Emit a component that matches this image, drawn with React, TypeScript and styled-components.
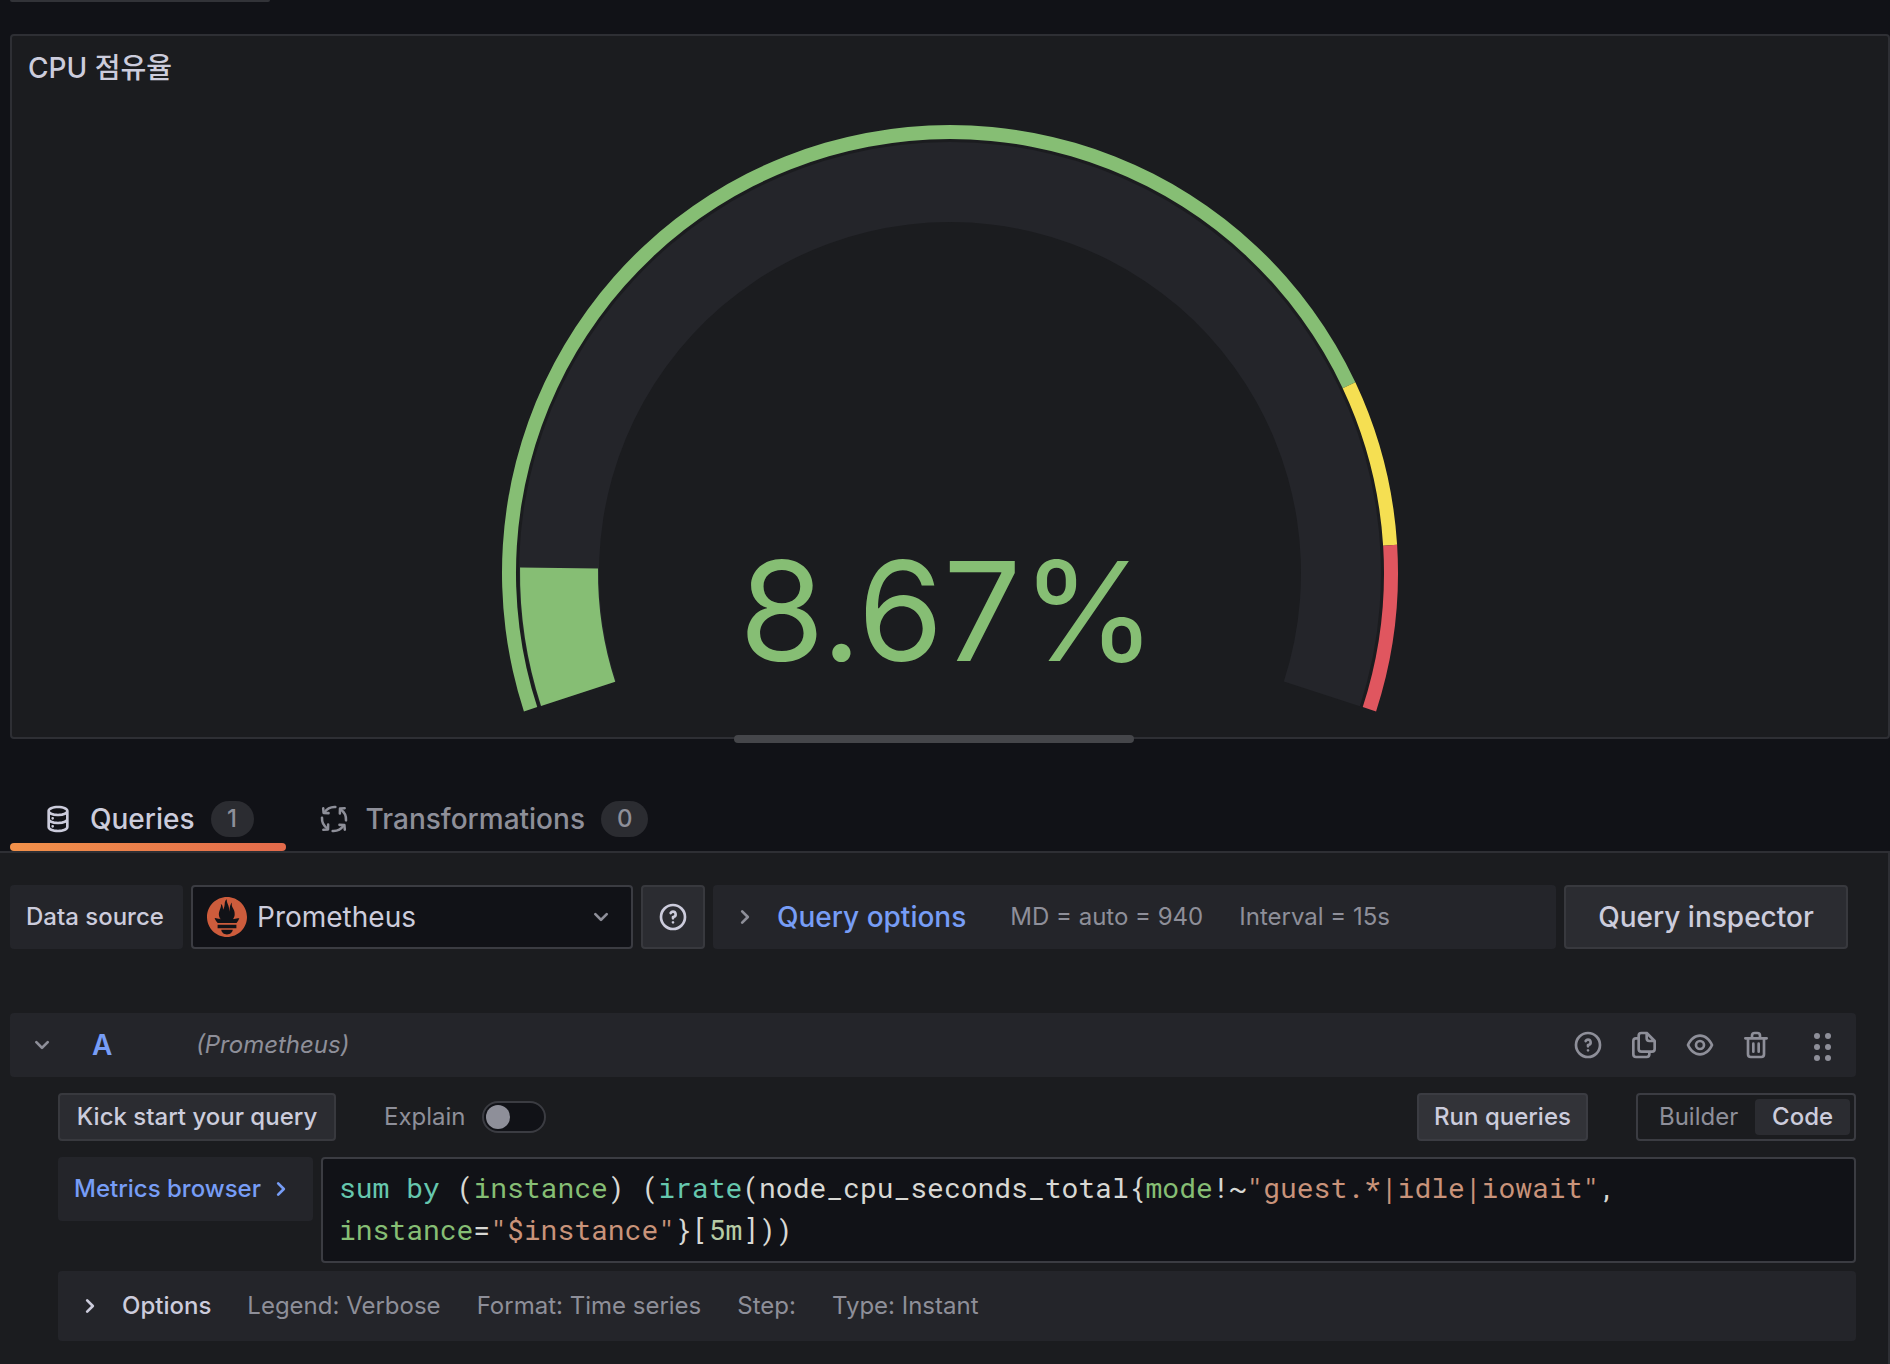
import React, { useId, useState } from 'react';
import styled, { createGlobalStyle, css } from 'styled-components';

const color = {
  canvas: '#111217',
  primary: '#1b1c1f',
  secondary: '#24252a',
  button: '#2b2c31',
  raised: '#323338',
  borderWeak: '#2e2f34',
  border: '#3b3c42',
  handle: '#45464a',
  text: '#ccccdc',
  muted: '#8e8f99',
  link: '#779df6',
  green: '#86be74',
  yellow: '#f5df52',
  red: '#e0565f',
  teal: '#66c7ae',
  string: '#c9937a',
  number: '#b6cba5',
  code: '#d8d8d4',
};

const fontSans = `Inter, 'Noto Sans CJK KR', 'Liberation Sans', sans-serif`;
const fontMono = `'Roboto Mono', 'DejaVu Sans Mono', 'Liberation Mono', monospace`;

const GlobalStyle = createGlobalStyle`
  *, *::before, *::after { box-sizing: border-box; }
  body {
    margin: 0;
    background: ${color.canvas};
    color: ${color.text};
    font-family: ${fontSans};
    font-size: 24px;
    line-height: 32px;
    -webkit-font-smoothing: antialiased;
  }
  button, select, textarea, input { font: inherit; color: inherit; margin: 0; }
  button { cursor: pointer; }
`;

/* ---------- icons ---------- */

const IconSvg = styled.svg`
  display: block;
  flex: none;
  width: 32px;
  height: 32px;
  fill: currentColor;
`;

const paths = {
  question:
    'M11.29,15.29a1.58,1.58,0,0,0-.12.15.76.76,0,0,0-.09.18.64.64,0,0,0-.06.18,1.36,1.36,0,0,0,0,.2.84.84,0,0,0,.08.38.9.9,0,0,0,.54.54.94.94,0,0,0,.76,0,.9.9,0,0,0,.54-.54A1,1,0,0,0,13,16a1,1,0,0,0-.29-.71A1,1,0,0,0,11.29,15.29ZM12,2A10,10,0,1,0,22,12,10,10,0,0,0,12,2Zm0,18a8,8,0,1,1,8-8A8,8,0,0,1,12,20ZM12,7A3,3,0,0,0,9.4,8.5a1,1,0,1,0,1.73,1A1,1,0,0,1,12,9a1,1,0,0,1,0,2,1,1,0,0,0-1,1v1a1,1,0,0,0,2,0v-.18A3,3,0,0,0,12,7Z',
  right:
    'M14.83,11.29,10.59,7.05a1,1,0,0,0-1.42,0,1,1,0,0,0,0,1.41L12.71,12,9.17,15.54a1,1,0,0,0,0,1.41,1,1,0,0,0,.71.29,1,1,0,0,0,.71-.29l4.24-4.24A1,1,0,0,0,14.83,11.29Z',
  down:
    'M17,9.17a1,1,0,0,0-1.41,0L12,12.71,8.46,9.17a1,1,0,0,0-1.41,0,1,1,0,0,0,0,1.42l4.24,4.24a1,1,0,0,0,1.42,0L17,10.59A1,1,0,0,0,17,9.17Z',
  copy:
    'M21,8.94a1.31,1.31,0,0,0-.06-.27l0-.09a1.07,1.07,0,0,0-.19-.28h0l-6-6h0a1.07,1.07,0,0,0-.28-.19.32.32,0,0,0-.09,0A.88.88,0,0,0,14.05,2H10A3,3,0,0,0,7,5V6H6A3,3,0,0,0,3,9V19a3,3,0,0,0,3,3h8a3,3,0,0,0,3-3V18h1a3,3,0,0,0,3-3V9S21,9,21,8.94ZM15,5.41,17.59,8H16a1,1,0,0,1-1-1ZM15,19a1,1,0,0,1-1,1H6a1,1,0,0,1-1-1V9A1,1,0,0,1,6,8H7v7a3,3,0,0,0,3,3h5Zm4-4a1,1,0,0,1-1,1H10a1,1,0,0,1-1-1V5a1,1,0,0,1,1-1h3V7a3,3,0,0,0,3,3h3Z',
  eye:
    'M21.92,11.6C19.9,6.91,16.1,4,12,4S4.1,6.91,2.08,11.6a1,1,0,0,0,0,.8C4.1,17.09,7.9,20,12,20s7.9-2.91,9.92-7.6A1,1,0,0,0,21.92,11.6ZM12,18c-3.17,0-6.17-2.29-7.9-6C5.83,8.29,8.83,6,12,6s6.17,2.29,7.9,6C18.17,15.71,15.17,18,12,18ZM12,8a4,4,0,1,0,4,4A4,4,0,0,0,12,8Zm0,6a2,2,0,1,1,2-2A2,2,0,0,1,12,14Z',
  trash:
    'M10,18a1,1,0,0,0,1-1V11a1,1,0,0,0-2,0v6A1,1,0,0,0,10,18ZM20,6H16V5a3,3,0,0,0-3-3H11A3,3,0,0,0,8,5V6H4A1,1,0,0,0,4,8H5V19a3,3,0,0,0,3,3h8a3,3,0,0,0,3-3V8h1a1,1,0,0,0,0-2ZM10,5a1,1,0,0,1,1-1h2a1,1,0,0,1,1,1V6H10Zm7,14a1,1,0,0,1-1,1H8a1,1,0,0,1-1-1V8H17Zm-3-1a1,1,0,0,0,1-1V11a1,1,0,0,0-2,0v6A1,1,0,0,0,14,18Z',
  database:
    'M8,16.5a1,1,0,1,0,1,1A1,1,0,0,0,8,16.5ZM12,2C8,2,4,3.37,4,6V18c0,2.63,4,4,8,4s8-1.37,8-4V6C20,3.37,16,2,12,2Zm6,16c0,.71-2.28,2-6,2s-6-1.29-6-2V14.73A13.16,13.16,0,0,0,12,16a13.16,13.16,0,0,0,6-1.27Zm0-6c0,.71-2.28,2-6,2s-6-1.29-6-2V8.73A13.16,13.16,0,0,0,12,10a13.16,13.16,0,0,0,6-1.27ZM12,8C8.28,8,6,6.71,6,6s2.28-2,6-2,6,1.29,6,2S15.72,8,12,8ZM8,10.5a1,1,0,1,0,1,1A1,1,0,0,0,8,10.5Z',
};

function Icon({ name }: { name: keyof typeof paths }) {
  return (
    <IconSvg viewBox="0 0 24 24" aria-hidden="true">
      <path d={paths[name]} />
    </IconSvg>
  );
}

function ProcessIcon() {
  return (
    <IconSvg viewBox="0 0 24 24" aria-hidden="true">
      {[0, 90, 180, 270].map((turn) => (
        <g
          key={turn}
          transform={`rotate(${turn} 12 12)`}
          fill="none"
          stroke="currentColor"
          strokeWidth="1.9"
          strokeLinecap="round"
          strokeLinejoin="round"
        >
          <path d="M13 3C9.6 2.8 6.6 4.4 4.7 7.2" />
          <path d="M3.9 4L4.2 7.5L7.9 7.6" />
        </g>
      ))}
    </IconSvg>
  );
}

function DragIcon() {
  return (
    <IconSvg viewBox="0 0 32 32" aria-hidden="true">
      {[7, 18, 29].map((y) => (
        <React.Fragment key={y}>
          <circle cx="9" cy={y} r="3" />
          <circle cx="20" cy={y} r="3" />
        </React.Fragment>
      ))}
    </IconSvg>
  );
}

const Logo = styled.svg`
  display: block;
  flex: none;
  width: 40px;
  height: 40px;
  fill: #cd5c3c;
`;

function PrometheusLogo() {
  return (
    <Logo viewBox="0 0 24 24" aria-hidden="true">
      <path d="M12 0C5.373 0 0 5.372 0 12c0 6.627 5.373 12 12 12s12-5.373 12-12c0-6.628-5.373-12-12-12zm0 22.46c-1.885 0-3.414-1.26-3.414-2.814h6.828c0 1.553-1.528 2.813-3.414 2.813zm5.64-3.745H6.36v-2.046h11.28v2.046zm-.04-3.098H6.391c-.037-.043-.075-.086-.111-.13-1.155-1.401-1.427-2.133-1.69-2.879-.005-.025 1.4.287 2.395.511 0 0 .513.119 1.262.255-.72-.843-1.147-1.915-1.147-3.01 0-2.406 1.845-4.508 1.18-6.207.648.053 1.34 1.367 1.387 3.422.689-.951.977-2.69.977-3.755 0-1.103.727-2.385 1.454-2.429-.648 1.069.168 1.984.894 4.256.272.854.237 2.29.447 3.201.07-1.892.395-4.652 1.595-5.605-.529 1.2.079 2.702.494 3.424.671 1.164 1.078 2.047 1.078 3.716 0 1.119-.411 2.173-1.11 2.996.792-.149 1.34-.283 1.34-.283l2.573-.502s-.374 1.538-1.819 3.132z" />
    </Logo>
  );
}

/* ---------- gauge ---------- */

const GAUGE = { cx: 450, cy: 473, start: 198, sweep: 216 };

function polar(radius: number, fraction: number) {
  const angle = ((GAUGE.start - GAUGE.sweep * fraction) * Math.PI) / 180;
  return `${GAUGE.cx + radius * Math.cos(angle)} ${GAUGE.cy - radius * Math.sin(angle)}`;
}

function band(inner: number, outer: number, from: number, to: number) {
  const large = (to - from) * GAUGE.sweep > 180 ? 1 : 0;
  return [
    `M${polar(outer, from)}`,
    `A${outer} ${outer} 0 ${large} 1 ${polar(outer, to)}`,
    `L${polar(inner, to)}`,
    `A${inner} ${inner} 0 ${large} 0 ${polar(inner, from)}Z`,
  ].join('');
}

const GaugeSvg = styled.svg`
  display: block;
  width: 900px;
  max-width: 100%;
  margin: 0 auto;
`;

const GaugeValue = styled.text`
  fill: ${color.green};
  font-family: ${fontSans};
  font-size: 138px;
  font-weight: 400;
  text-anchor: middle;
`;

function Gauge({ value }: { value: number }) {
  return (
    <GaugeSvg viewBox="0 0 900 637" role="img" aria-label={`CPU ${value}%`}>
      <path d={band(351, 431, 0, 1)} fill={color.secondary} />
      <path d={band(352, 430, 0, value / 100)} fill={color.green} />
      <path d={band(434, 448, 0, 0.8)} fill={color.green} />
      <path d={band(434, 448, 0.8, 0.9)} fill={color.yellow} />
      <path d={band(434, 448, 0.9, 1)} fill={color.red} />
      <GaugeValue x="448" y="561">{`${value}%`}</GaugeValue>
    </GaugeSvg>
  );
}

/* ---------- page frame ---------- */

const Page = styled.div`
  display: flex;
  flex-direction: column;
  min-height: 100vh;
`;

const TopBar = styled.header`
  height: 34px;
  padding-left: 10px;
`;

const TopBarEdge = styled.div`
  width: 260px;
  height: 2px;
  border-radius: 0 0 4px 4px;
  background: ${color.raised};
`;

const Panel = styled.section`
  margin-left: 10px;
  border: 2px solid ${color.borderWeak};
  border-radius: 4px;
  background: ${color.primary};
`;

const PanelTitle = styled.h2`
  margin: 0;
  padding: 16px;
  font-size: 28px;
  line-height: 32px;
  font-weight: 500;
`;

const Resizer = styled.div`
  display: flex;
  justify-content: center;
  margin: -4px 32px 0 10px;
`;

const ResizeHandle = styled.div`
  position: relative;
  width: 400px;
  height: 8px;
  border-radius: 4px;
  background: ${color.handle};
  cursor: row-resize;
`;

const Tabs = styled.div`
  display: flex;
  align-items: flex-end;
  height: 108px;
  padding-left: 10px;
`;

const Tab = styled.button<{ $active: boolean }>`
  display: flex;
  align-items: center;
  gap: 16px;
  height: 56px;
  padding: 0 32px;
  border: 0;
  border-bottom: 8px solid transparent;
  background: none;
  color: ${(p) => (p.$active ? color.text : color.muted)};
  font-size: 28px;
  font-weight: 500;
  position: relative;
  ${(p) =>
    p.$active &&
    css`
      &::after {
        content: '';
        position: absolute;
        left: 0;
        right: 0;
        bottom: -8px;
        height: 8px;
        border-radius: 4px;
        background: linear-gradient(90deg, #f2914a, #e36a4b);
      }
    `}
`;

const Counter = styled.span`
  min-width: 43px;
  padding: 2px 16px;
  border-radius: 20px;
  background: ${color.button};
  color: ${color.muted};
  font-size: 24px;
  line-height: 32px;
`;

const Editor = styled.main`
  flex: 1;
  display: flex;
  flex-direction: column;
  padding: 32px 32px 22px 10px;
  border-top: 2px solid ${color.borderWeak};
  border-right: 2px solid ${color.borderWeak};
  background: ${color.primary};
`;

/* ---------- data source row ---------- */

const SourceRow = styled.div`
  display: flex;
  gap: 8px;
  height: 64px;
  padding-right: 8px;
`;

const block = css`
  display: flex;
  align-items: center;
  border: 0;
  border-radius: 4px;
  background: ${color.secondary};
`;

const FieldLabel = styled.label`
  ${block}
  min-width: 173px;
  padding: 0 16px;
  font-weight: 500;
`;

const SelectBox = styled.div`
  flex: 0 1 442px;
  display: flex;
  align-items: center;
  gap: 10px;
  padding: 0 14px;
  border: 2px solid ${color.border};
  border-radius: 4px;
  background: ${color.canvas};

  > :last-child {
    color: ${color.muted};
  }
`;

const Select = styled.select`
  flex: 1;
  min-width: 0;
  height: 60px;
  padding: 0;
  border: 0;
  outline: 0;
  appearance: none;
  background: ${color.canvas};
  font-size: 28px;
`;

const Button = styled.button<{ $large?: boolean; $square?: boolean; $raised?: boolean; $width?: number }>`
  display: flex;
  align-items: center;
  justify-content: center;
  flex: none;
  height: ${(p) => (p.$large ? 64 : 48)}px;
  min-width: ${(p) => p.$width ?? 64}px;
  padding: 0 ${(p) => (p.$square ? 0 : p.$large ? 30 : 14)}px;
  border: 2px solid ${(p) => (p.$raised ? color.border : '#38393e')};
  border-radius: 4px;
  background: ${(p) => (p.$raised ? color.raised : color.button)};
  font-size: ${(p) => (p.$large ? 28 : 24)}px;
  font-weight: 500;
  white-space: nowrap;
`;

const QueryOptions = styled.button`
  ${block}
  flex: 1;
  gap: 36px;
  padding: 0 16px;
  color: ${color.muted};
  white-space: nowrap;
`;

const OptionsTitle = styled.span<{ $link?: boolean }>`
  display: flex;
  align-items: center;
  gap: 16px;
  color: ${(p) => (p.$link ? color.muted : color.text)};

  b {
    color: ${(p) => (p.$link ? color.link : color.text)};
    font-size: ${(p) => (p.$link ? 28 : 24)}px;
    font-weight: 500;
    padding-right: ${(p) => (p.$link ? 8 : 0)}px;
  }
`;

/* ---------- query row ---------- */

const QueryHeader = styled.div`
  ${block}
  height: 64px;
  margin-top: 64px;
  padding: 0 16px;
  color: ${color.muted};
`;

const IconButton = styled.button`
  display: block;
  padding: 0;
  border: 0;
  background: none;
`;

const RefId = styled.button`
  width: 104px;
  margin-left: 34px;
  padding: 0;
  border: 0;
  background: none;
  color: ${color.link};
  font-size: 28px;
  font-weight: 600;
  text-align: left;
`;

const SourceName = styled.em`
  flex: 1;
`;

const Actions = styled.div`
  display: flex;
  gap: 24px;
  margin-right: 36px;
`;

const QueryBody = styled.div`
  display: flex;
  flex-direction: column;
  margin: 16px 0 0 48px;
`;

const Toolbar = styled.div`
  display: flex;
  align-items: center;
  margin-bottom: 16px;
`;

const SwitchField = styled.label`
  display: flex;
  align-items: center;
  gap: 16px;
  margin: 0 auto 0 48px;
  color: ${color.muted};
`;

const Switch = styled.input`
  appearance: none;
  display: flex;
  align-items: center;
  width: 64px;
  height: 32px;
  padding: 0 2px;
  border: 2px solid ${color.border};
  border-radius: 16px;
  background: ${color.canvas};
  cursor: pointer;

  &::before {
    content: '';
    width: 24px;
    height: 24px;
    border-radius: 50%;
    background: ${color.muted};
  }

  &:checked::before {
    margin-left: auto;
    background: ${color.link};
  }
`;

const RadioGroup = styled.fieldset`
  display: flex;
  min-width: 220px;
  margin: 0 0 0 48px;
  padding: 4px;
  height: 48px;
  border: 2px solid ${color.border};
  border-radius: 4px;
`;

const RadioLabel = styled.label`
  position: relative;
  display: flex;
  flex: 1 0 auto;
  align-items: center;
  justify-content: center;
  padding: 0 16px;
  border-radius: 4px;
  color: ${color.muted};
  cursor: pointer;

  input {
    position: absolute;
    opacity: 0;
  }

  &:has(input:checked) {
    background: ${color.button};
    color: ${color.text};
    font-weight: 500;
  }
`;

const ExpressionRow = styled.div`
  display: flex;
  align-items: flex-start;
  gap: 8px;
  margin-bottom: 8px;
`;

const MetricsButton = styled.button`
  ${block}
  flex: none;
  gap: 4px;
  height: 64px;
  padding: 0 16px;
  color: ${color.link};
  font-weight: 500;
`;

const CodeBox = styled.div`
  flex: 1;
  min-width: 0;
  display: grid;
  border: 2px solid ${color.border};
  border-radius: 4px;
  background: ${color.canvas};
`;

const codeText = css`
  grid-area: 1 / 1;
  margin: 0;
  padding: 8px 16px 10px;
  font-family: ${fontMono};
  font-size: 28px;
  line-height: 42px;
  white-space: pre-wrap;
  overflow-wrap: break-word;
`;

const CodeView = styled.pre`
  ${codeText}
  color: ${color.code};
`;

const CodeInput = styled.textarea`
  ${codeText}
  width: 100%;
  border: 0;
  outline: 0;
  resize: none;
  overflow: hidden;
  background: transparent;
  color: transparent;
  caret-color: ${color.text};
`;

const tokenColors = {
  keyword: color.teal,
  label: color.green,
  string: color.string,
  number: color.number,
  plain: color.code,
};

const Token = styled.span<{ $kind: keyof typeof tokenColors }>`
  color: ${(p) => tokenColors[p.$kind]};
`;

function tokenize(source: string) {
  return source.split(/("[^"]*"|\b\d+[smhdw]\b|\b\w+\b)/).map((text) => {
    let kind: keyof typeof tokenColors = 'plain';
    if (text.startsWith('"')) kind = 'string';
    else if (/^\d+[smhdw]$/.test(text)) kind = 'number';
    else if (/^(sum|by|irate|rate|avg)$/.test(text)) kind = 'keyword';
    else if (/^(instance|mode|job)$/.test(text)) kind = 'label';
    return { text, kind };
  });
}

const QuerySettings = styled.button`
  ${block}
  min-height: 70px;
  gap: 36px;
  padding: 0 16px;
  color: ${color.muted};
  text-align: left;
`;

const settings = ['Legend: Verbose', 'Format: Time series', 'Step:', 'Type: Instant'];

export default function App() {
  const sourceId = useId();
  const [tab, setTab] = useState('queries');
  const [mode, setMode] = useState('Code');
  const [query, setQuery] = useState(
    'sum by (instance) (irate(node_cpu_seconds_total{mode!~"guest.*|idle|iowait", instance="$instance"}[5m]))',
  );

  return (
    <Page>
      <GlobalStyle />
      <TopBar>
        <TopBarEdge />
      </TopBar>

      <Panel>
        <PanelTitle>CPU 점유율</PanelTitle>
        <Gauge value={8.67} />
      </Panel>
      <Resizer>
        <ResizeHandle role="separator" />
      </Resizer>

      <Tabs role="tablist">
        <Tab role="tab" $active={tab === 'queries'} onClick={() => setTab('queries')}>
          <Icon name="database" />
          Queries
          <Counter>1</Counter>
        </Tab>
        <Tab role="tab" $active={tab === 'transform'} onClick={() => setTab('transform')}>
          <ProcessIcon />
          Transformations
          <Counter>0</Counter>
        </Tab>
      </Tabs>

      <Editor>
        <SourceRow>
          <FieldLabel htmlFor={sourceId}>Data source</FieldLabel>
          <SelectBox>
            <PrometheusLogo />
            <Select id={sourceId} defaultValue="Prometheus">
              <option>Prometheus</option>
            </Select>
            <Icon name="down" />
          </SelectBox>
          <Button $large $square aria-label="Data source help">
            <Icon name="question" />
          </Button>
          <QueryOptions>
            <OptionsTitle $link>
              <Icon name="right" />
              <b>Query options</b>
            </OptionsTitle>
            <span>MD = auto = 940</span>
            <span>Interval = 15s</span>
          </QueryOptions>
          <Button $large $width={284}>
            Query inspector
          </Button>
        </SourceRow>

        <QueryHeader>
          <IconButton aria-label="Collapse query">
            <Icon name="down" />
          </IconButton>
          <RefId>A</RefId>
          <SourceName>(Prometheus)</SourceName>
          <Actions>
            <IconButton aria-label="Help">
              <Icon name="question" />
            </IconButton>
            <IconButton aria-label="Duplicate query">
              <Icon name="copy" />
            </IconButton>
            <IconButton aria-label="Toggle query">
              <Icon name="eye" />
            </IconButton>
            <IconButton aria-label="Remove query">
              <Icon name="trash" />
            </IconButton>
          </Actions>
          <IconButton aria-label="Move query">
            <DragIcon />
          </IconButton>
        </QueryHeader>

        <QueryBody>
          <Toolbar>
            <Button $width={278}>Kick start your query</Button>
            <SwitchField>
              Explain
              <Switch type="checkbox" role="switch" />
            </SwitchField>
            <Button $raised $width={171}>
              Run queries
            </Button>
            <RadioGroup aria-label="Editor mode">
              {['Builder', 'Code'].map((name) => (
                <RadioLabel key={name}>
                  <input
                    type="radio"
                    name="mode"
                    checked={mode === name}
                    onChange={() => setMode(name)}
                  />
                  {name}
                </RadioLabel>
              ))}
            </RadioGroup>
          </Toolbar>

          <ExpressionRow>
            <MetricsButton>
              Metrics browser
              <Icon name="right" />
            </MetricsButton>
            <CodeBox>
              <CodeView aria-hidden="true">
                {tokenize(query).map((token, i) => (
                  <Token key={i} $kind={token.kind}>
                    {token.text}
                  </Token>
                ))}
              </CodeView>
              <CodeInput
                aria-label="Query expression"
                rows={1}
                spellCheck={false}
                value={query}
                onChange={(e) => setQuery(e.target.value)}
              />
            </CodeBox>
          </ExpressionRow>

          <QuerySettings>
            <OptionsTitle>
              <Icon name="right" />
              <b>Options</b>
            </OptionsTitle>
            {settings.map((item) => (
              <span key={item}>{item}</span>
            ))}
          </QuerySettings>
        </QueryBody>
      </Editor>
    </Page>
  );
}
